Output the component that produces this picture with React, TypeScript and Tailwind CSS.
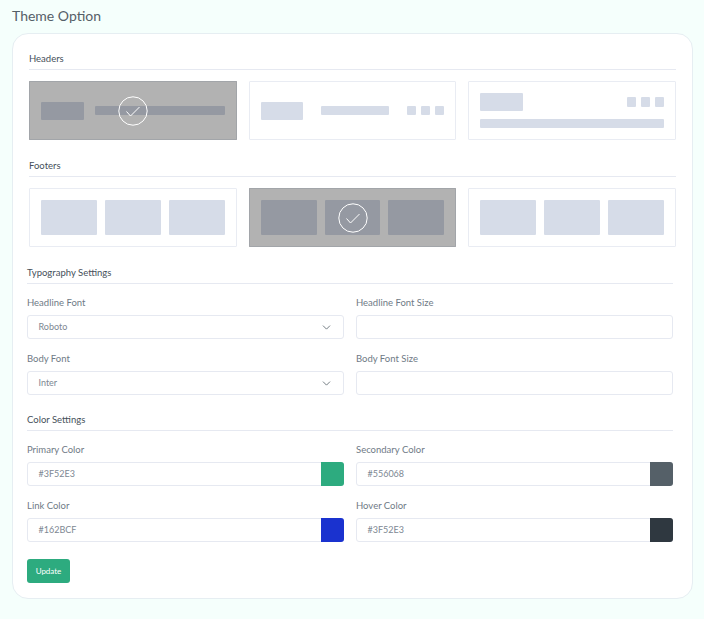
import { ChevronDown } from 'lucide-react'

const Check = () => (
  <div className="absolute -inset-px flex items-center justify-center bg-black/30">
    <svg width="30" height="30" viewBox="0 0 30 30" fill="none" stroke="#fff" strokeWidth="1">
      <circle cx="15" cy="15" r="14.2" />
      <path d="M8.5 15.5 L12.5 20 L21.5 11" />
    </svg>
  </div>
)

const Tile = ({ selected, className, children }: { selected?: boolean; className?: string; children: React.ReactNode }) => (
  <div className={`relative h-[59px] min-w-0 flex-1 rounded-[1px] border border-[#e9ecf3] bg-white p-[11px] ${className ?? ''}`}>
    {children}
    {selected && <Check />}
  </div>
)

const Block = ({ className }: { className: string }) => <div className={`rounded-[1px] bg-[#d6dce8] ${className}`} />

const Dots = () => (
  <div className="flex gap-[4.5px]">
    <Block className="h-[9.5px] w-[9.5px]" />
    <Block className="h-[9.5px] w-[9.5px]" />
    <Block className="h-[9.5px] w-[9.5px]" />
  </div>
)

const FooterTile = ({ selected }: { selected?: boolean }) => (
  <Tile selected={selected} className="flex gap-[8px]">
    <Block className="h-[35px] flex-1" />
    <Block className="h-[35px] flex-1" />
    <Block className="h-[35px] flex-1" />
  </Tile>
)

const SectionTitle = ({ children, className }: { children: React.ReactNode; className?: string }) => (
  <div className={`h-[21px] border-b border-[#e6e9f1] pt-[2px] text-[9.5px] leading-[15px] text-[#46505a] ${className ?? ''}`}>
    {children}
  </div>
)

const Field = ({ label, children }: { label: string; children: React.ReactNode }) => (
  <div className="w-[317px]">
    <div className="mb-[4px] h-[17px] text-[9.5px] leading-[18px] text-[#6f7a86]">{label}</div>
    {children}
  </div>
)

const Box = ({ value, chevron }: { value?: string; chevron?: boolean }) => (
  <div className="flex h-[24px] items-center justify-between rounded-[3px] border border-[#e6e9f1] bg-white pr-[10px] pl-[10.5px] text-[9px] text-[#7d8792]">
    <span>{value}</span>
    {chevron && <ChevronDown size={13} strokeWidth={1.5} className="text-[#556068]" />}
  </div>
)

const ColorBox = ({ value, color }: { value: string; color: string }) => (
  <div className="flex h-[24px] items-stretch rounded-[3px] border border-[#e6e9f1] bg-white text-[9px] text-[#7d8792]">
    <span className="flex flex-1 items-center pl-[10.5px]">{value}</span>
    <div className={`-my-px -mr-px w-[23px] rounded-r-[3px] ${color}`} />
  </div>
)

export default function App() {
  return (
    <div className="min-h-[619px] bg-[#f5fffc] pt-[7px] pl-[12px] font-['Lato',sans-serif]">
      <h1 className="h-[26px] text-[14px] leading-[17px] font-normal text-[#556068]">Theme Option</h1>

      <div className="h-[566px] w-[681px] rounded-[16px] border border-[#e6eef2] bg-white pt-[15px]">
        <div className="ml-[16px] w-[647px]">
          <SectionTitle>Headers</SectionTitle>
          <div className="mt-[11px] flex gap-[12px]">
            <Tile selected className="flex items-center gap-[11px]">
              <Block className="h-[18px] w-[43px]" />
              <Block className="h-[9px] flex-1" />
            </Tile>
            <Tile className="flex items-center">
              <Block className="h-[18px] w-[43px]" />
              <Block className="ml-[18px] h-[9px] w-[68px]" />
              <div className="ml-[18px]"><Dots /></div>
            </Tile>
            <Tile className="flex flex-col justify-between">
              <div className="flex items-center justify-between">
                <Block className="h-[18px] w-[43px]" />
                <Dots />
              </div>
              <Block className="h-[9px] w-full" />
            </Tile>
          </div>

          <SectionTitle className="mt-[16px]">Footers</SectionTitle>
          <div className="mt-[11px] flex gap-[12px]">
            <FooterTile />
            <FooterTile selected />
            <FooterTile />
          </div>
        </div>

        <div className="mt-[16px] ml-[14px] w-[646px]">
          <SectionTitle>Typography Settings</SectionTitle>
          <div className="mt-[10px] grid grid-cols-[317px_317px] gap-x-[12px] gap-y-[11px]">
            <Field label="Headline Font"><Box value="Roboto" chevron /></Field>
            <Field label="Headline Font Size"><Box /></Field>
            <Field label="Body Font"><Box value="Inter" chevron /></Field>
            <Field label="Body Font Size"><Box /></Field>
          </div>

          <SectionTitle className="mt-[15px]">Color Settings</SectionTitle>
          <div className="mt-[10px] grid grid-cols-[317px_317px] gap-x-[12px] gap-y-[11px]">
            <Field label="Primary Color"><ColorBox value="#3F52E3" color="bg-[#2dab7f]" /></Field>
            <Field label="Secondary Color"><ColorBox value="#556068" color="bg-[#556068]" /></Field>
            <Field label="Link Color"><ColorBox value="#162BCF" color="bg-[#1a32cf]" /></Field>
            <Field label="Hover Color"><ColorBox value="#3F52E3" color="bg-[#2f3840]" /></Field>
          </div>

          <button className="mt-[17px] h-[24px] w-[43px] rounded-[3px] bg-[#2dab7f] text-[8px] text-white">Update</button>
        </div>
      </div>
    </div>
  )
}
